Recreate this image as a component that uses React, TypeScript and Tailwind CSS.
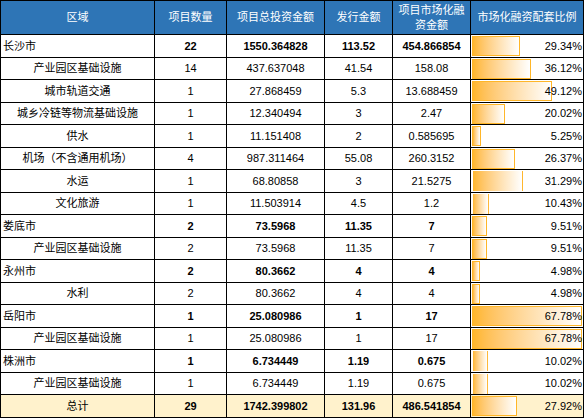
type Row = {
  name: string;
  city?: boolean;
  count: string;
  invest: string;
  issue: string;
  market: string;
  ratio: number;
  edge?: boolean;
};

const rows: Row[] = [
  { name: "长沙市", city: true, count: "22", invest: "1550.364828", issue: "113.52", market: "454.866854", ratio: 29.34, edge: true },
  { name: "产业园区基础设施", count: "14", invest: "437.637048", issue: "41.54", market: "158.08", ratio: 36.12, edge: true },
  { name: "城市轨道交通", count: "1", invest: "27.868459", issue: "5.3", market: "13.688459", ratio: 49.12, edge: true },
  { name: "城乡冷链等物流基础设施", count: "1", invest: "12.340494", issue: "3", market: "2.47", ratio: 20.02, edge: true },
  { name: "供水", count: "1", invest: "11.151408", issue: "2", market: "0.585695", ratio: 5.25, edge: true },
  { name: "机场（不含通用机场）", count: "4", invest: "987.311464", issue: "55.08", market: "260.3152", ratio: 26.37, edge: true },
  { name: "水运", count: "1", invest: "68.80858", issue: "3", market: "21.5275", ratio: 31.29 },
  { name: "文化旅游", count: "1", invest: "11.503914", issue: "4.5", market: "1.2", ratio: 10.43 },
  { name: "娄底市", city: true, count: "2", invest: "73.5968", issue: "11.35", market: "7", ratio: 9.51, edge: true },
  { name: "产业园区基础设施", count: "2", invest: "73.5968", issue: "11.35", market: "7", ratio: 9.51, edge: true },
  { name: "永州市", city: true, count: "2", invest: "80.3662", issue: "4", market: "4", ratio: 4.98, edge: true },
  { name: "水利", count: "2", invest: "80.3662", issue: "4", market: "4", ratio: 4.98, edge: true },
  { name: "岳阳市", city: true, count: "1", invest: "25.080986", issue: "1", market: "17", ratio: 67.78, edge: true },
  { name: "产业园区基础设施", count: "1", invest: "25.080986", issue: "1", market: "17", ratio: 67.78, edge: true },
  { name: "株洲市", city: true, count: "1", invest: "6.734449", issue: "1.19", market: "0.675", ratio: 10.02 },
  { name: "产业园区基础设施", count: "1", invest: "6.734449", issue: "1.19", market: "0.675", ratio: 10.02 },
];

const total: Row = { name: "总计", count: "29", invest: "1742.399802", issue: "131.96", market: "486.541854", ratio: 27.92, edge: true };

function RatioCell({ row }: { row: Row }) {
  return (
    <td className="border border-black p-0">
      <div className="relative h-[21px] flex items-center justify-end pr-[1px]">
        {/* excel-style data bar */}
        <div
          className={`absolute left-[1px] top-[1px] bottom-0 bg-linear-to-r from-[#ffb628] to-white border ${row.edge ? "border-[#ffb628]" : "border-transparent"}`}
          style={{ width: Math.round(row.ratio * 1.625) }}
        />
        <span className="relative">{row.ratio.toFixed(2)}%</span>
      </div>
    </td>
  );
}

function DataRow({ row, foot }: { row: Row; foot?: boolean }) {
  const num = row.city || foot ? "font-bold" : "";
  return (
    <tr className={`h-[22.5px] ${foot ? "bg-[#fff2cc]" : "bg-white"}`}>
      <td className={`border border-black py-0 ${row.city ? "text-left pl-[2px]" : "text-center"}`}>{row.name}</td>
      <td className={`border border-black py-0 text-center ${num}`}>{row.count}</td>
      <td className={`border border-black py-0 text-center ${num}`}>{row.invest}</td>
      <td className={`border border-black py-0 text-center ${num}`}>{row.issue}</td>
      <td className={`border border-black py-0 text-center ${num}`}>{row.market}</td>
      <RatioCell row={row} />
    </tr>
  );
}

export default function App() {
  return (
    <div className="w-[584px] h-[419px] bg-white overflow-hidden font-['Liberation_Sans','Noto_Sans_CJK_SC',sans-serif] text-[11px] text-black">
      <table className="w-[583px] table-fixed border-collapse">
        <colgroup>
          <col className="w-[154px]" />
          <col className="w-[72px]" />
          <col className="w-[98px]" />
          <col className="w-[68px]" />
          <col className="w-[78px]" />
          <col className="w-[113px]" />
        </colgroup>
        <thead>
          <tr className="h-[34px] bg-[#2e75b6] text-white">
            <th className="border border-black font-normal">区域</th>
            <th className="border border-black font-normal">项目数量</th>
            <th className="border border-black font-normal">项目总投资金额</th>
            <th className="border border-black font-normal">发行金额</th>
            <th className="border border-black font-normal leading-[15px]">
              项目市场化融
              <br />
              资金额
            </th>
            <th className="border border-black font-normal">市场化融资配套比例</th>
          </tr>
        </thead>
        <tbody>
          {rows.map((r, i) => (
            <DataRow key={i} row={r} />
          ))}
          <DataRow row={total} foot />
        </tbody>
      </table>
    </div>
  );
}
